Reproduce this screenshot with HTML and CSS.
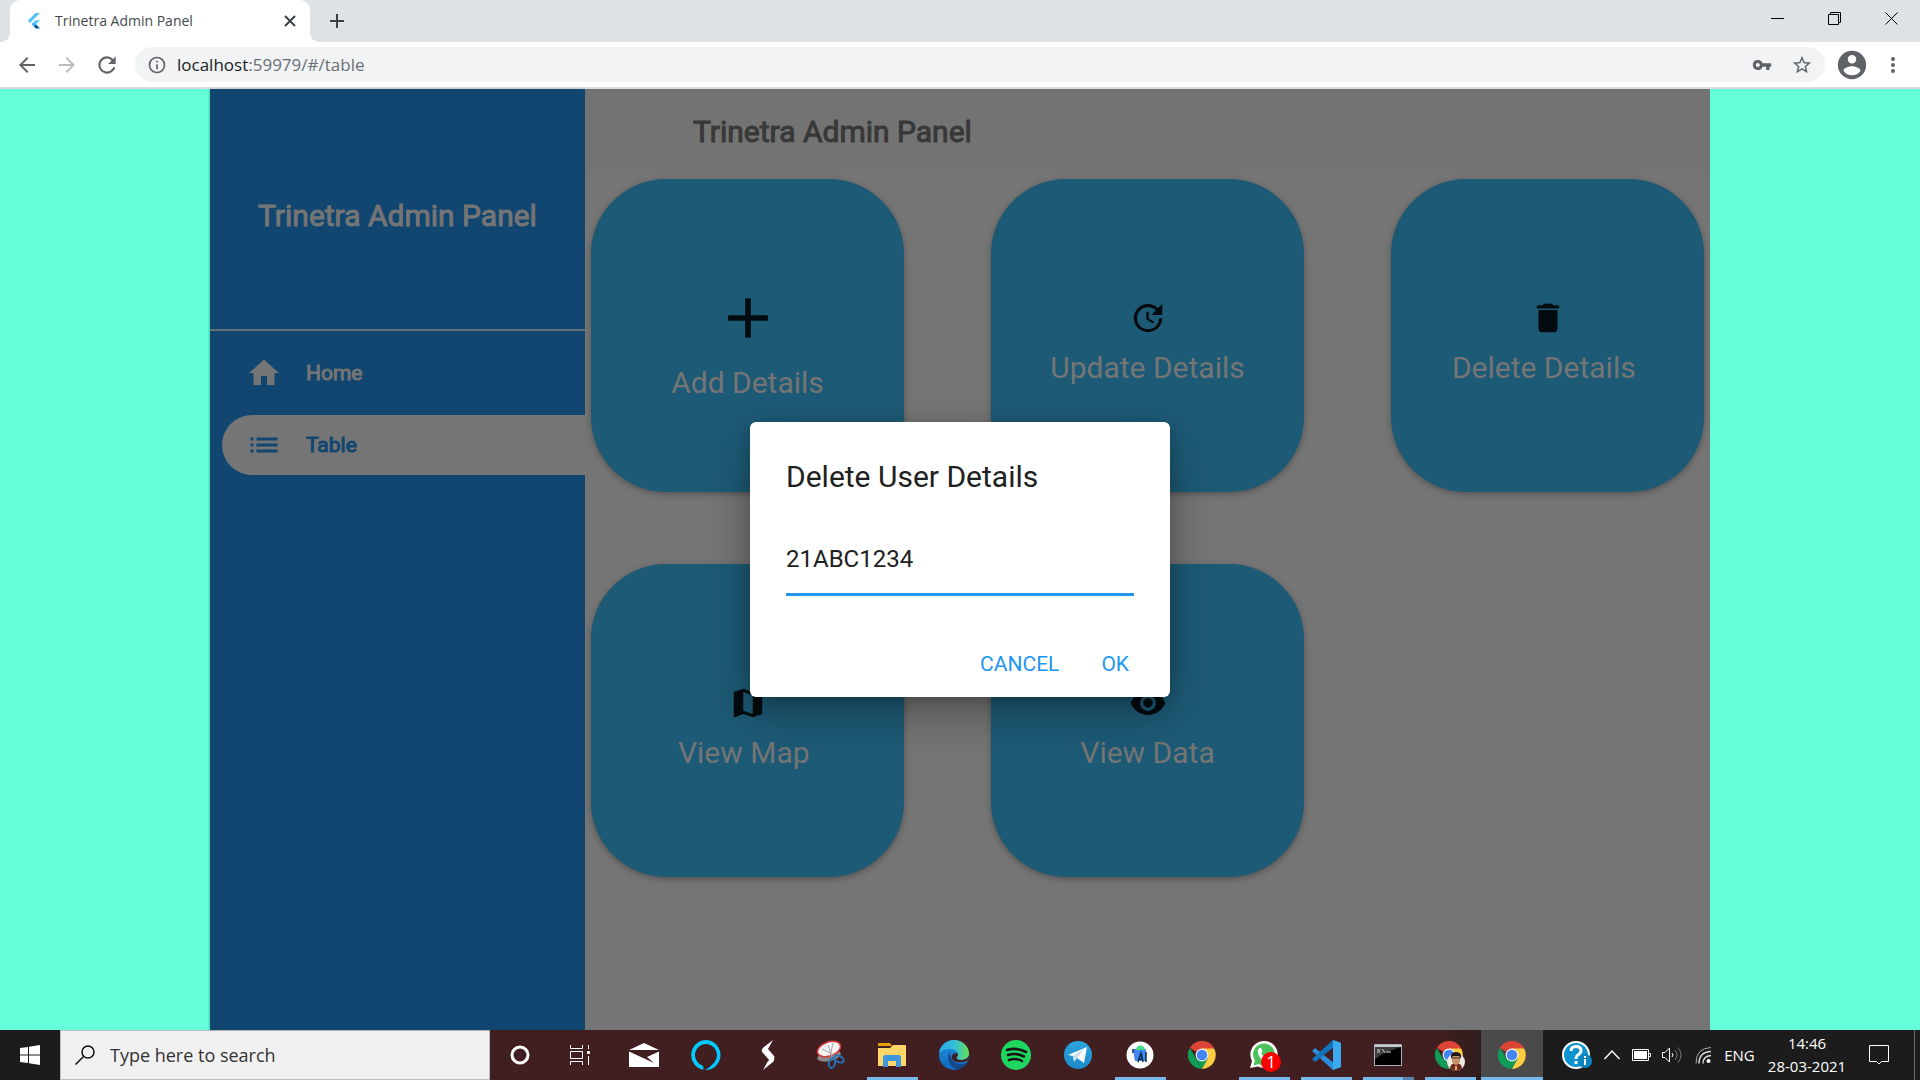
FILE: index.html
```html
<!DOCTYPE html>
<html lang="en">
<head>
<meta charset="utf-8">
<title>Trinetra Admin Panel</title>
<link rel="stylesheet" href="styles.css">
</head>
<body>
<svg class="defs" aria-hidden="true">
  <defs>
    <linearGradient id="edge-a" x1="0" y1="0" x2="1" y2="0"><stop offset="0" stop-color="#2aa6e8"/><stop offset=".55" stop-color="#35c1d6"/><stop offset="1" stop-color="#66e04f"/></linearGradient>
    <linearGradient id="edge-b" x1="0" y1="0" x2="0" y2="1"><stop offset="0" stop-color="#2390dc"/><stop offset="1" stop-color="#1169bf"/></linearGradient>
    <linearGradient id="tg" x1="0" y1="0" x2="0" y2="1"><stop offset="0" stop-color="#2ba6e0"/><stop offset="1" stop-color="#1c8ac8"/></linearGradient>
    <symbol id="chrome" viewBox="0 0 48 48">
      <path fill="#db4437" d="M3.200 12A24 24 0 0 1 44.800 12L24 24z"/>
      <path fill="#0f9d58" d="M3.200 12 13.600 30 24 48A24 24 0 0 1 3.200 12z"/>
      <path fill="#0f9d58" d="M13.600 30 24 24 34.400 30 24 48z"/>
      <path fill="#ffcd40" d="M24 13H44.900A24 24 0 0 1 24 48L34 30z"/>
      <circle cx="24" cy="24" r="11" fill="#f1f1f1"/><circle cx="24" cy="24" r="9" fill="#4285f4"/>
    </symbol>
  </defs>
</svg>

<header class="browser">
  <div class="tabstrip">
    <div class="tab">
      <svg class="favicon" viewBox="0 0 16 16" width="16" height="16"><path fill="#54c5f8" d="M9.500 0H14L4 10 1.700 7.800z"/><path fill="#54c5f8" d="M9.500 7.200H14L10 11.300 7.700 9z"/><path fill="#29b6f6" d="M5.500 11.200 7.800 9 10 11.300 7.800 13.500z"/><path fill="#01579b" d="m7.800 13.500 2.200-2.200 4 4.200H9.800z"/></svg>
      <span class="tab-title">Trinetra Admin Panel</span>
      <button class="icon-btn tab-close" aria-label="Close tab"><svg width="12" height="12" viewBox="0 0 12 12"><path d="M1 1l10 10M11 1 1 11" stroke="#3c4043" stroke-width="2"/></svg></button>
    </div>
    <button class="icon-btn new-tab" aria-label="New tab"><svg width="16" height="16" viewBox="0 0 16 16"><path d="M8 1v14M1 8h14" stroke="#3c4043" stroke-width="2"/></svg></button>
    <div class="window-controls">
      <button class="icon-btn" aria-label="Minimize"><svg width="14" height="14" viewBox="0 0 14 14"><path d="M0 6.500h13" stroke="#000"/></svg></button>
      <button class="icon-btn" aria-label="Restore"><svg width="14" height="14" viewBox="0 0 14 14" fill="none" stroke="#000"><path d="M.5 2.500h10v10H.5zM2.500 2.500v-2h10v10h-2"/></svg></button>
      <button class="icon-btn" aria-label="Close"><svg width="14" height="14" viewBox="0 0 14 14"><path d="M.5.500l12 12M12.500.500l-12 12" stroke="#000"/></svg></button>
    </div>
  </div>
  <div class="toolbar">
    <button class="icon-btn nav-btn" aria-label="Back"><svg width="24" height="24" viewBox="0 0 24 24"><path fill="#5f6368" d="M20 11H7.830l5.590-5.590L12 4l-8 8 8 8 1.410-1.410L7.830 13H20z"/></svg></button>
    <button class="icon-btn nav-btn" aria-label="Forward"><svg width="24" height="24" viewBox="0 0 24 24"><path fill="#bbbdbf" d="m12 4-1.410 1.410L16.170 11H4v2h12.170l-5.580 5.590L12 20l8-8z"/></svg></button>
    <button class="icon-btn nav-btn" aria-label="Reload"><svg width="26" height="26" viewBox="0 0 24 24"><path fill="#5f6368" d="M17.650 6.350A7.960 7.960 0 0 0 12 4a8 8 0 1 0 7.730 10h-2.080A6 6 0 1 1 12 6c1.660 0 3.140.690 4.220 1.780L13 11h7V4z"/></svg></button>
    <div class="omnibox">
      <svg width="20" height="20" viewBox="0 0 24 24"><path fill="#5f6368" d="M11 17h2v-6h-2zm1-15a10 10 0 1 0 0 20 10 10 0 0 0 0-20m0 18a8 8 0 1 1 0-16 8 8 0 0 1 0 16M11 9h2V7h-2z"/></svg>
      <span class="url"><span class="host">localhost</span>:59979/#/table</span>
      <button class="icon-btn omni-btn" aria-label="Passwords"><svg width="20" height="20" viewBox="0 0 24 24"><path fill="#5f6368" d="M12.650 10A6 6 0 0 0 1 12a6 6 0 0 0 11.650 2H17v4h4v-4h2v-4zM7 14.500a2.500 2.500 0 1 1 0-5 2.500 2.500 0 0 1 0 5"/></svg></button>
      <button class="icon-btn omni-btn" aria-label="Bookmark"><svg width="22" height="22" viewBox="0 0 24 24"><path fill="#5f6368" d="m22 9.240-7.190-.620L12 2 9.190 8.630 2 9.240l5.460 4.730L5.820 21 12 17.270 18.180 21l-1.630-7.030zM12 15.400l-3.760 2.270 1-4.280-3.320-2.880 4.380-.380L12 6.100l1.710 4.040 4.380.380-3.320 2.880 1 4.280z"/></svg></button>
    </div>
    <button class="icon-btn profile" aria-label="Profile"><svg width="34" height="34" viewBox="0 0 24 24"><path fill="#5f6368" d="M12 2a10 10 0 1 0 0 20 10 10 0 0 0 0-20m0 3a3 3 0 1 1 0 6 3 3 0 0 1 0-6m0 14.200A7.200 7.200 0 0 1 6 16c.030-2 4-3.100 6-3.100s5.970 1.100 6 3.100a7.200 7.200 0 0 1-6 3.200"/></svg></button>
    <button class="icon-btn more" aria-label="Menu"><svg width="20" height="20" viewBox="0 0 20 20" fill="#5f6368"><circle cx="10" cy="4" r="2"/><circle cx="10" cy="10" r="2"/><circle cx="10" cy="16" r="2"/></svg></button>
  </div>
</header>

<main class="viewport">
  <div class="app">
    <nav class="sidebar">
      <div class="brand">Trinetra Admin Panel</div>
      <a class="menu-item" href="#/home"><svg width="36" height="36" viewBox="0 0 24 24"><path fill="currentColor" stroke="none" d="M10 20v-6h4v6h5v-8h3L12 3 2 12h3v8z"/></svg>Home</a>
      <a class="menu-item active" href="#/table"><svg width="36" height="36" viewBox="0 0 24 24"><path fill="currentColor" stroke="none" d="M3 13h2v-2H3zm0 4h2v-2H3zm0-8h2V7H3zm4 4h14v-2H7zm0 4h14v-2H7zM7 7v2h14V7z"/></svg>Table</a>
    </nav>
    <section class="content">
      <h1 class="page-title">Trinetra Admin Panel</h1>
      <div class="cards">
        <button class="card"><svg width="68" height="68" viewBox="0 0 24 24"><path d="M19 13h-6v6h-2v-6H5v-2h6V5h2v6h6z"/></svg><span>Add Details</span></button>
        <button class="card"><svg width="38" height="38" viewBox="0 0 24 24"><path d="M21 10.120h-6.780l2.740-2.820c-2.730-2.700-7.150-2.800-9.880-.100a6.875 6.875 0 0 0 0 9.790 7.020 7.020 0 0 0 9.880 0C18.320 15.650 19 14.080 19 12.100h2c0 1.980-.880 4.550-2.640 6.290-3.510 3.480-9.210 3.480-12.720 0-3.500-3.470-3.530-9.110-.020-12.580a8.987 8.987 0 0 1 12.650 0L21 3zM12.500 8v4.250l3.500 2.080-.720 1.210L11 13V8z"/></svg><span>Update Details</span></button>
        <button class="card"><svg width="38" height="38" viewBox="0 0 24 24"><path d="M6 19c0 1.100.900 2 2 2h8c1.100 0 2-.900 2-2V7H6zM19 4h-3.500l-1-1h-5l-1 1H5v2h14z"/></svg><span>Delete Details </span></button>
        <button class="card"><svg width="38" height="38" viewBox="0 0 24 24"><path d="m20.500 3-.160.030L15 5.100 9 3 3.360 4.900c-.210.070-.360.250-.360.480V20.500c0 .280.220.500.500.500l.160-.030L9 18.900l6 2.100 5.640-1.900c.210-.070.360-.250.360-.480V3.500c0-.280-.220-.500-.500-.500M15 19l-6-2.110V5l6 2.110z"/></svg><span>View Map </span></button>
        <button class="card"><svg width="38" height="38" viewBox="0 0 24 24"><path d="M12 4.500C7 4.500 2.730 7.610 1 12c1.730 4.390 6 7.500 11 7.500s9.270-3.110 11-7.500c-1.730-4.390-6-7.500-11-7.500M12 17a5 5 0 1 1 0-10 5 5 0 0 1 0 10m0-8a3 3 0 1 0 0 6 3 3 0 0 0 0-6"/></svg><span>View Data</span></button>
      </div>
    </section>
    <div class="scrim">
      <form class="dialog" role="dialog" aria-labelledby="dialog-title">
        <h2 id="dialog-title">Delete User Details</h2>
        <input type="text" value="21ABC1234" aria-labelledby="dialog-title">
        <div class="actions"><button type="button">CANCEL</button><button type="button">OK</button></div>
      </form>
    </div>
  </div>
</main>

<footer class="taskbar">
  <button class="task start" aria-label="Start"><svg width="20" height="20" viewBox="0 0 20 20" fill="#fff"><path d="M0 3l8-1v7.500H0zM9 1.800 20 0v9.500H9zM0 10.500h8V18l-8-1zM9 10.500h11V20L9 18.200z"/></svg></button>
  <label class="search">
    <svg width="20" height="20" viewBox="0 0 20 20" fill="none" stroke="#111" stroke-width="1.500"><circle cx="13" cy="7" r="6"/><path d="M8.500 11.500.500 19.500"/></svg>
    <input type="text" placeholder="Type here to search" aria-label="Type here to search">
  </label>
  <div class="apps">
    <button class="task" aria-label="Cortana"><svg width="20" height="20" viewBox="0 0 20 20"><circle cx="10" cy="10" r="8" fill="none" stroke="#fff" stroke-width="3"/></svg></button>
    <button class="task views" aria-label="Task View"><svg width="20" height="20" viewBox="0 0 20 20" fill="none" stroke="#fff"><path d="M.5 0v3.500h12V0M.5 20v-3.500h12V20M.5 6.500h12v7H.5zM18.500 0v4M18.500 11v9"/><path fill="#fff" d="M17.500 6.500h2v2h-2z"/></svg></button>
    <button class="task" aria-label="Mail"><svg width="30" height="24" viewBox="0 0 30 24" fill="#fff"><path d="M0 7 15 0l15 7H0z"/><path d="M0 8.500V24h30V8.500L18 14l7 6z"/></svg></button>
    <button class="task" aria-label="Alexa"><svg width="30" height="30" viewBox="0 0 30 30"><path fill="#00caff" d="M15 0a15 15 0 0 0-2.800 29.700c.600-.800.500-2.700-.700-4.300A11 11 0 1 1 26 15c0 5-4.500 11-12 15a15 15 0 0 0 1-30"/></svg></button>
    <button class="task" aria-label="S"><svg width="14" height="30" viewBox="0 0 14 30" fill="#fff"><path d="M12 0 3 7Q-1 10 2 13l7 8 4-3q1-1 0-2L7 9z"/><path d="M2 30 12 22q2-2 1-5l-6 4z"/></svg></button>
    <button class="task" aria-label="Snipping Tool"><svg width="30" height="30" viewBox="0 0 30 30"><ellipse cx="14" cy="16" rx="12" ry="5" fill="#8c8787" transform="rotate(-12 14 16)"/><ellipse cx="14" cy="9" rx="12" ry="7" fill="#f7f4f4" stroke="#d8393b" stroke-width="1.500" transform="rotate(-20 14 9)"/><path d="m13 5 4 12M7 9l12 6M18 3l-3 13" stroke="#a5a5a5" fill="none"/><g fill="none" stroke="#2275bd" stroke-width="2"><ellipse cx="17" cy="23" rx="3" ry="5" transform="rotate(12 17 23)"/><ellipse cx="24" cy="19" rx="5" ry="3" transform="rotate(30 24 19)"/></g></svg></button>
    <button class="task open" aria-label="File Explorer"><svg width="28" height="24" viewBox="0 0 28 24"><path fill="#e3a008" d="M0 1q0-1 1-1h11l2 3H0z"/><path fill="#ffd667" d="M0 5h12l3-3h12q1 0 1 1v20H0z"/><path fill="#3e97dc" d="M5 24V14q0-2 2-2h14q2 0 2 2v10h-5v-6h-8v6z"/></svg></button>
    <button class="task" aria-label="Edge"><svg width="30" height="30" viewBox="0 0 30 30"><circle cx="15" cy="15" r="15" fill="url(#edge-b)"/><path fill="url(#edge-a)" d="M0 13C1 5 8 0 15 0c9 0 15 7 15 13 0 5-4 7-8 7-3 0-4.500-1-4.500-2s1.500-1.500 1.500-4c0-3-4-5-8-5-5 0-9 2-11 4"/><path fill="#114a8b" d="M11 12c-4 4-2 14 7 17.500 5-1 8-4 10-7-8 4-18 0-17-10.500"/><path fill="#411e1f" d="M18 13c-4 0-6 3-5 6 2 4 9 4 15 2 1-1 2-3 2-5-2 3-5 4-8 4s-5-1-4.500-2.500Q20 15 18 13"/></svg></button>
    <button class="task" aria-label="Spotify"><svg width="30" height="30" viewBox="0 0 30 30"><circle cx="15" cy="15" r="15" fill="#1ed760"/><path d="M6 10q10-3 19 2M7 15q8-2.500 16 1.500M8 20q7-2.500 13 1" stroke="#191414" stroke-width="2.600" stroke-linecap="round" fill="none"/></svg></button>
    <button class="task" aria-label="Telegram"><svg width="30" height="30" viewBox="0 0 30 30"><circle cx="15" cy="15" r="14" fill="url(#tg)"/><path fill="#fff" d="M5 15 24 7l-3 16-7-5-3 3-1-5z"/><path fill="#c8daea" d="m10 16 11-7-7 9-3 4z"/></svg></button>
    <button class="task open" aria-label="Android Studio"><svg width="28" height="28" viewBox="0 0 28 28"><circle cx="14" cy="14" r="13.500" fill="#fff"/><path fill="#4285f4" d="M7 8h13v12H9z"/><path fill="#3ddc84" d="M10 9a4.500 4.500 0 0 1 9 0z"/><path d="m12 21 3-9 2 9M13 18h3M20 11v10M7 8v4" stroke="#073042" stroke-width="1.500" fill="none"/></svg></button>
    <button class="task" aria-label="Chrome"><svg width="28" height="28"><use href="#chrome"/></svg></button>
    <button class="task open" aria-label="WhatsApp"><svg width="28" height="28" viewBox="0 0 28 28"><path fill="#fff" d="M14 0a13.500 13.500 0 1 1-6 25.500L0 27l2-7A13.500 13.500 0 0 1 14 0"/><path fill="#4bc25c" d="M14 2.500a11 11 0 1 1-5.500 20.600l-5 1.400 1.400-5A11 11 0 0 1 14 2.500"/><path fill="#fff" d="M9 7q2-1 3 2t-1 3q2 4 6 5l2-1v4q-4 2-8-2Q6 12 9 7"/></svg><span class="badge">1</span></button>
    <button class="task open" aria-label="Visual Studio Code"><svg width="30" height="30" viewBox="0 0 30 30"><path fill="#2a8fd6" d="m22 0 8 3v24l-8 3L1 11l3-3 18 14z"/><path fill="#1374bd" d="M22 0v8L4 22l-3-3z"/><path fill="#3ba9ef" d="m22 0 8 3v24l-8 3z"/><path fill="#411e1f" d="m22 8-9 7 9 7z"/></svg></button>
    <button class="task open grouped" aria-label="Command Prompt"><svg width="28" height="22" viewBox="0 0 28 22"><path fill="#000" stroke="#a9b0b5" d="M.500.500h27v21H.5z"/><path fill="#c5cbd0" d="M1 1h26v2H1z"/><path fill="#3c3c3c" d="M1 3h26Q14 6 1 15z"/><path d="M3 6h3M3 8h3M8 5l3 4M12 8h5" stroke="#ddd" fill="none"/></svg></button>
    <button class="task open" aria-label="Chrome profile"><svg width="32" height="32" viewBox="0 0 32 32"><use href="#chrome" x="1" y="2" width="28" height="28"/><circle cx="22" cy="23" r="9" fill="#eee9e2"/><path fill="#6b2a25" d="M16 30q0-6 6-6t6 6q-6 4-12 0"/><path fill="#c99564" d="M18 16h8v7q-4 6-8 0z"/><path fill="#1c1614" d="M17 19q-1-6 5-6t5 6l-2-2h-6z"/><path d="M17 19h10" stroke="#333"/><path d="M22 27v4" stroke="#e6b541" stroke-width="2"/></svg></button>
    <button class="task open current" aria-label="Chrome, current window"><svg width="28" height="28"><use href="#chrome"/></svg></button>
  </div>
  <div class="tray">
    <button class="task help" aria-label="Help"><svg width="30" height="28" viewBox="0 0 30 28"><circle cx="14" cy="14" r="13" fill="#0d93d2" stroke="#fff" stroke-width="2"/><path d="M9 10q0-4.500 5-4.500t5 4q0 2.500-2.500 4T14 17v1M14 20v3" stroke="#fff" stroke-width="3" fill="none"/><circle cx="23" cy="20" r="7" fill="#0d84c0"/><path d="M23 18v6M23 15v2" stroke="#fff" stroke-width="2"/></svg></button>
    <button class="task wide" aria-label="Show hidden icons"><svg width="16" height="10" viewBox="0 0 16 10"><path d="m.500 9 7.500-8 7.500 8" stroke="#fff" stroke-width="1.400" fill="none"/></svg></button>
    <button class="task narrow" aria-label="Battery"><svg width="20" height="12" viewBox="0 0 20 12"><path d="M.5.500h16v11H.5zM17 4.500h1.500v3H17" stroke="#fff" fill="none"/><path fill="#fff" d="M2 2h13v8H2z"/></svg></button>
    <button class="task wide" aria-label="Volume"><svg width="20" height="18" viewBox="0 0 20 18" fill="none" stroke="#fff"><path d="M.5 6.500H3L7.500 2v14L3 11.500H.5z"/><path d="M10 7q2 2 0 4"/><path d="M13 4q4 5 0 10M16 1.500q6 7.500 0 15" stroke="#777"/></svg></button>
    <button class="task net" aria-label="Network"><svg width="16" height="18" viewBox="0 0 16 18" fill="none" stroke="#ddd"><path d="M1 17.500Q1 2 16 1.500" stroke="#aaa"/><path d="M4 17.500Q4 6 16 5.500M8 17.500Q8 10 16 9.500" stroke-width="1.400"/><circle cx="13.500" cy="15" r="2" fill="#fff" stroke="none"/></svg></button>
    <button class="task lang">ENG</button>
    <button class="task clock"><time>14:46</time><time>28-03-2021</time></button>
    <button class="task notes" aria-label="Notifications"><svg width="20" height="20" viewBox="0 0 20 20"><path d="M.5.500h19v16h-7L10 19l-2.500-2.500h-7z" stroke="#fff" fill="none"/></svg></button>
    <button class="task desktop" aria-label="Show desktop"></button>
  </div>
</footer>
</body>
</html>
```
FILE: styles.css
```css
* { box-sizing: border-box; }

body {
  margin: 0;
  min-height: 100vh;
  display: flex;
  flex-direction: column;
  font-family: Roboto, "Liberation Sans", sans-serif;
}

button, input { font: inherit; color: inherit; border: 0; margin: 0; padding: 0; background: none; outline: none; }
svg { flex: none; display: block; }
.defs { position: absolute; width: 0; height: 0; }

/* Browser frame */
.browser { font-family: "Open Sans", "Noto Sans", sans-serif; background: #fff; border-bottom: 2px solid #dadce0; }
.icon-btn { display: flex; align-items: center; justify-content: center; flex: none; }

.tabstrip { display: flex; height: 42px; background: #dee1e6; padding-left: 10px; }
.tab {
  position: relative;
  display: flex;
  align-items: center;
  width: 300px;
  padding: 0 14px 0 16px;
  background: #fff;
  border-radius: 10px 10px 0 0;
}
.tab::before, .tab::after { content: ""; position: absolute; bottom: 0; width: 10px; height: 10px; }
.tab::before { left: -10px; background: radial-gradient(circle at 0 0, #dee1e6 10px, #fff 10px); }
.tab::after { right: -10px; background: radial-gradient(circle at 100% 0, #dee1e6 10px, #fff 10px); }
.tab-title { flex: 1; margin-left: 13px; font-size: 14px; line-height: 20px; color: #45494d; white-space: nowrap; }
.new-tab { width: 34px; margin-left: 10px; }
.window-controls { display: flex; margin-left: auto; height: 38px; }
.window-controls .icon-btn { width: 57px; }

.toolbar { display: flex; align-items: center; height: 45px; padding: 0 12px 0 7px; }
.nav-btn { width: 40px; }
.omnibox {
  flex: 1;
  display: flex;
  align-items: center;
  height: 35px;
  margin-left: 8px;
  padding: 0 3px 0 12px;
  border-radius: 18px;
  background: #f1f3f4;
}
.url { flex: 1; margin-left: 10px; font-size: 17px; line-height: 24px; color: #6b6f74; }
.host { color: #202124; }
.omni-btn { width: 40px; }
.profile { width: 53px; }
.more { width: 30px; }

/* Admin panel */
.viewport { flex: 1; display: flex; justify-content: center; background: #64ffda; }
.app { position: relative; display: flex; width: 100%; max-width: 1500px; background: #757575; }

.sidebar { flex: 1; background: #10466f; color: #757575; box-shadow: -1px 0 2px rgba(0, 0, 0, .2); }
.brand {
  display: flex;
  align-items: center;
  justify-content: center;
  height: 242px;
  padding-top: 14px;
  margin-bottom: 12px;
  border-bottom: 2px solid #607078;
  font-size: 30px;
  line-height: 36px;
  -webkit-text-stroke: 1px;
}
.menu-item {
  display: flex;
  align-items: center;
  gap: 24px;
  height: 60px;
  margin: 0 0 12px 12px;
  padding-left: 24px;
  border-radius: 30px 0 0 30px;
  color: inherit;
  font-size: 21px;
  text-decoration: none;
  -webkit-text-stroke: 1px;
}
.menu-item.active { background: #757575; color: #10466f; }

.content { position: relative; flex: 3; background: #757575; }
.page-title {
  margin: 0;
  padding: 25px 108px 23px;
  background: #737373;
  color: #383838;
  font-size: 30px;
  font-weight: 400;
  line-height: 36px;
  -webkit-text-stroke: 1px;
}
.cards { display: grid; grid-template-columns: repeat(3, 1fr); gap: 72px 87px; padding: 6px; }
.card {
  display: flex;
  flex-direction: column;
  align-items: center;
  justify-content: center;
  gap: 13px;
  aspect-ratio: 1;
  padding-top: 13px;
  border-radius: 75px;
  background: #1d5a75;
  box-shadow: 0 2px 6px rgba(0, 0, 0, .3);
  color: #757575;
  font-size: 30px;
  line-height: 36px;
  white-space: pre;
}
.card svg { fill: #020b0f; }

/* Dialog */
.scrim { position: absolute; inset: 0; display: flex; align-items: center; justify-content: center; }
.dialog {
  width: 420px;
  padding-top: 37px;
  border-radius: 6px;
  background: #fff;
  color: #212121;
  box-shadow: 0 16px 44px rgba(0, 0, 0, .3), 0 4px 14px rgba(0, 0, 0, .15);
}
.dialog h2 { margin: 0 36px 28px; font-size: 30px; font-weight: 400; line-height: 36px; }
.dialog input {
  display: block;
  width: 348px;
  margin: 0 36px 36px;
  padding: 21px 0 19px;
  border-bottom: 3px solid #2196f3;
  font-size: 24px;
  line-height: 30px;
}
.actions { display: flex; justify-content: flex-end; gap: 6px; padding: 5px 23px 6px; }
.actions button { height: 54px; padding: 0 18px; color: #2196f3; font-size: 21px; }

/* Taskbar */
.taskbar { display: flex; height: 50px; background: #1c1c1c; color: #fff; font-family: "Open Sans", "Noto Sans", sans-serif; }
.task { position: relative; display: flex; align-items: center; justify-content: center; flex: none; }
.start { width: 60px; }
.search {
  display: flex;
  align-items: center;
  gap: 15px;
  flex: 0 1 430px;
  padding-left: 14px;
  border: 1px solid #bdbdbd;
  background: #f1f1f1;
}
.search input { flex: 1; min-width: 0; font-size: 18px; }
.search input::placeholder { color: #333; opacity: 1; }
.apps { display: flex; background: linear-gradient(90deg, #411e1f 90%, #2c1c1c 95%); }
.apps .task { width: 62px; }
.apps .task:first-child { width: 60px; }
.apps .views { width: 63px; padding-right: 3px; }
.open::after { content: ""; position: absolute; left: 6px; right: 5px; bottom: 0; height: 3px; background: #76b9ed; }
.grouped::after { background: linear-gradient(90deg, #76b9ed 40px, #5585ad 40px); }
.current { background: #4b4a4a; }
.current::after { left: 0; right: 0; }
.badge {
  position: absolute;
  right: 14px;
  bottom: 8px;
  width: 20px;
  height: 20px;
  border-radius: 50%;
  background: #f00;
  font-size: 17px;
  line-height: 20px;
  text-align: center;
}
.tray { display: flex; margin-left: auto; }
.help { width: 34px; }
.wide { width: 36px; }
.narrow { width: 24px; }
.net { width: 26px; }
.lang { width: 47px; font-size: 15px; }
.clock { width: 88px; flex-direction: column; font-size: 15px; line-height: 23px; }
.notes { width: 56px; margin-right: 7px; }
.desktop { width: 6px; border-left: 1px solid #666; }
```
